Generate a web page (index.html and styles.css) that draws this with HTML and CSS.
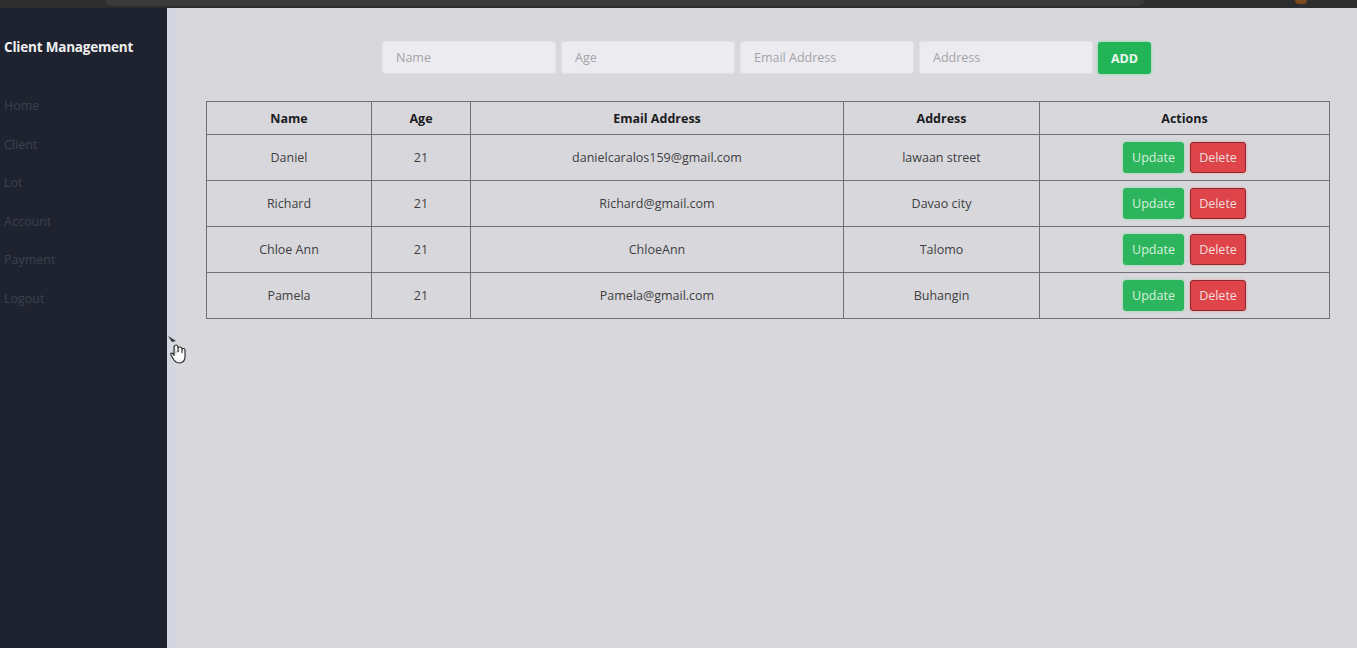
FILE: index.html
```html
<!DOCTYPE html>
<html>
<head>
<meta charset="utf-8">
<link rel="stylesheet" href="styles.css">
</head>
<body>
<div class="topbar"><div class="tab"></div><div class="glow"></div></div>
<div class="app">
  <aside class="sidebar">
    <h1 class="brand">Client Management</h1>
    <nav class="nav">
      <a>Home</a>
      <a>Client</a>
      <a>Lot</a>
      <a>Account</a>
      <a>Payment</a>
      <a>Logout</a>
    </nav>
  </aside>
  <main class="main">
    <form class="form">
      <input class="field" placeholder="Name">
      <input class="field" placeholder="Age">
      <input class="field" placeholder="Email Address">
      <input class="field" placeholder="Address">
      <button type="button" class="btn-add">ADD</button>
    </form>
    <table class="grid">
      <colgroup>
        <col class="c1"><col class="c2"><col class="c3"><col class="c4"><col class="c5">
      </colgroup>
      <thead>
        <tr><th>Name</th><th>Age</th><th>Email Address</th><th>Address</th><th>Actions</th></tr>
      </thead>
      <tbody>
        <tr><td>Daniel</td><td>21</td><td>danielcaralos159@gmail.com</td><td>lawaan street</td><td><span class="acts"><button class="btn upd">Update</button><button class="btn del">Delete</button></span></td></tr>
        <tr><td>Richard</td><td>21</td><td>Richard@gmail.com</td><td>Davao city</td><td><span class="acts"><button class="btn upd">Update</button><button class="btn del">Delete</button></span></td></tr>
        <tr><td>Chloe Ann</td><td>21</td><td>ChloeAnn</td><td>Talomo</td><td><span class="acts"><button class="btn upd">Update</button><button class="btn del">Delete</button></span></td></tr>
        <tr><td>Pamela</td><td>21</td><td>Pamela@gmail.com</td><td>Buhangin</td><td><span class="acts"><button class="btn upd">Update</button><button class="btn del">Delete</button></span></td></tr>
      </tbody>
    </table>
  </main>
</div>
<svg class="cursor" width="20" height="30" viewBox="0 0 20 30">
  <path d="M0 0 L8 5 L4 6 Z" fill="#333"/>
  <path d="M6 10 V20 M6 12 Q6 9 8 9 Q10 9 10 12 V16 M10 13 Q10 11 12 11 Q14 11 14 13 V17 M14 14 Q14 12.5 15.5 12.5 Q17 12.5 17 14 V21 Q17 26 12 27 Q8 27 6 24 L3 19 Q2 17 4 17 L6 19" fill="#fff" stroke="#333" stroke-width="1.2"/>
</svg>
</body>
</html>
```

FILE: styles.css
```css
* { box-sizing: border-box; }
html, body { margin: 0; height: 100%; }
body {
  font-family: "Open Sans", "Noto Sans", sans-serif;
  background: #d8d8dc;
  overflow: hidden;
  position: relative;
}
.topbar {
  height: 8px;
  background: #2d2d2d;
  position: relative;
}
.topbar .tab {
  position: absolute;
  left: 105px;
  width: 1040px;
  top: 0;
  height: 6px;
  background: #3a3a3a;
  border-radius: 0 0 6px 6px;
}
.topbar .glow {
  position: absolute;
  left: 1295px;
  top: 0;
  width: 12px;
  height: 4px;
  background: #7a4a1c;
  border-radius: 0 0 6px 6px;
}
.app {
  display: flex;
  height: 640px;
}
.sidebar {
  width: 167px;
  flex: none;
  background: #1f2330;
  padding: 29px 0 0 4px;
}
.brand {
  margin: 0;
  color: #f0f0f2;
  font-size: 13.5px;
  font-weight: 700;
  line-height: 20px;
  letter-spacing: -0.2px;
}
.nav {
  display: flex;
  flex-direction: column;
  margin-top: 40px;
}
.nav a {
  color: #3c414e;
  font-size: 12.5px;
  line-height: 18px;
  height: 38.6px;
}
.main {
  flex: 1;
  padding: 33px 27px 0 39px;
  background: linear-gradient(to right, #d4d7df 0, #d4d7df 10px, #d8d8dc 10px);
}
.form {
  display: flex;
  justify-content: center;
  gap: 5px;
  padding-right: 3px;
  margin: 0;
}
.field {
  width: 174px;
  height: 33px;
  background: #ececf0;
  border: 1px solid #e2e2e6;
  border-radius: 3px;
  padding: 0 13px;
  font-family: inherit;
  font-size: 12.5px;
  color: #555;
  outline: none;
}
.field::placeholder { color: #a3a3aa; }
.btn-add {
  width: 53px;
  height: 32px;
  margin-top: 1px;
  background: #22b558;
  border: none;
  border-radius: 3px;
  color: #eef7f0;
  font-family: inherit;
  font-weight: 700;
  font-size: 12.5px;
  box-shadow: 0 0 3px rgba(60, 220, 110, 0.6);
}
.grid {
  margin-top: 27px;
  width: 1123px;
  border-collapse: collapse;
  table-layout: fixed;
  font-size: 12.5px;
}
.c1 { width: 165px; }
.c2 { width: 99px; }
.c3 { width: 373px; }
.c4 { width: 196px; }
.c5 { width: 290px; }
.grid th, .grid td {
  border: 1px solid #707074;
  text-align: center;
  padding: 0;
}
.grid th {
  height: 33px;
  font-weight: 700;
  color: #1c1c1e;
}
.grid td {
  height: 46px;
  color: #3e3e42;
}
.acts {
  display: inline-flex;
  gap: 6px;
  vertical-align: middle;
}
.btn {
  height: 31px;
  border-radius: 3px;
  font-family: inherit;
  font-size: 12.5px;
  padding: 0;
}
.upd {
  width: 61px;
  background: #2cb55c;
  border: 1px solid #2cb55c;
  color: #d8f0de;
  box-shadow: 0 0 3px rgba(60, 220, 110, 0.5);
}
.del {
  width: 56px;
  background: #df444b;
  border: 1px solid #8a2a2e;
  color: #f7dcdc;
  box-shadow: 0 0 3px rgba(255, 110, 110, 0.6);
}
.cursor {
  position: absolute;
  left: 168px;
  top: 336px;
}
```
